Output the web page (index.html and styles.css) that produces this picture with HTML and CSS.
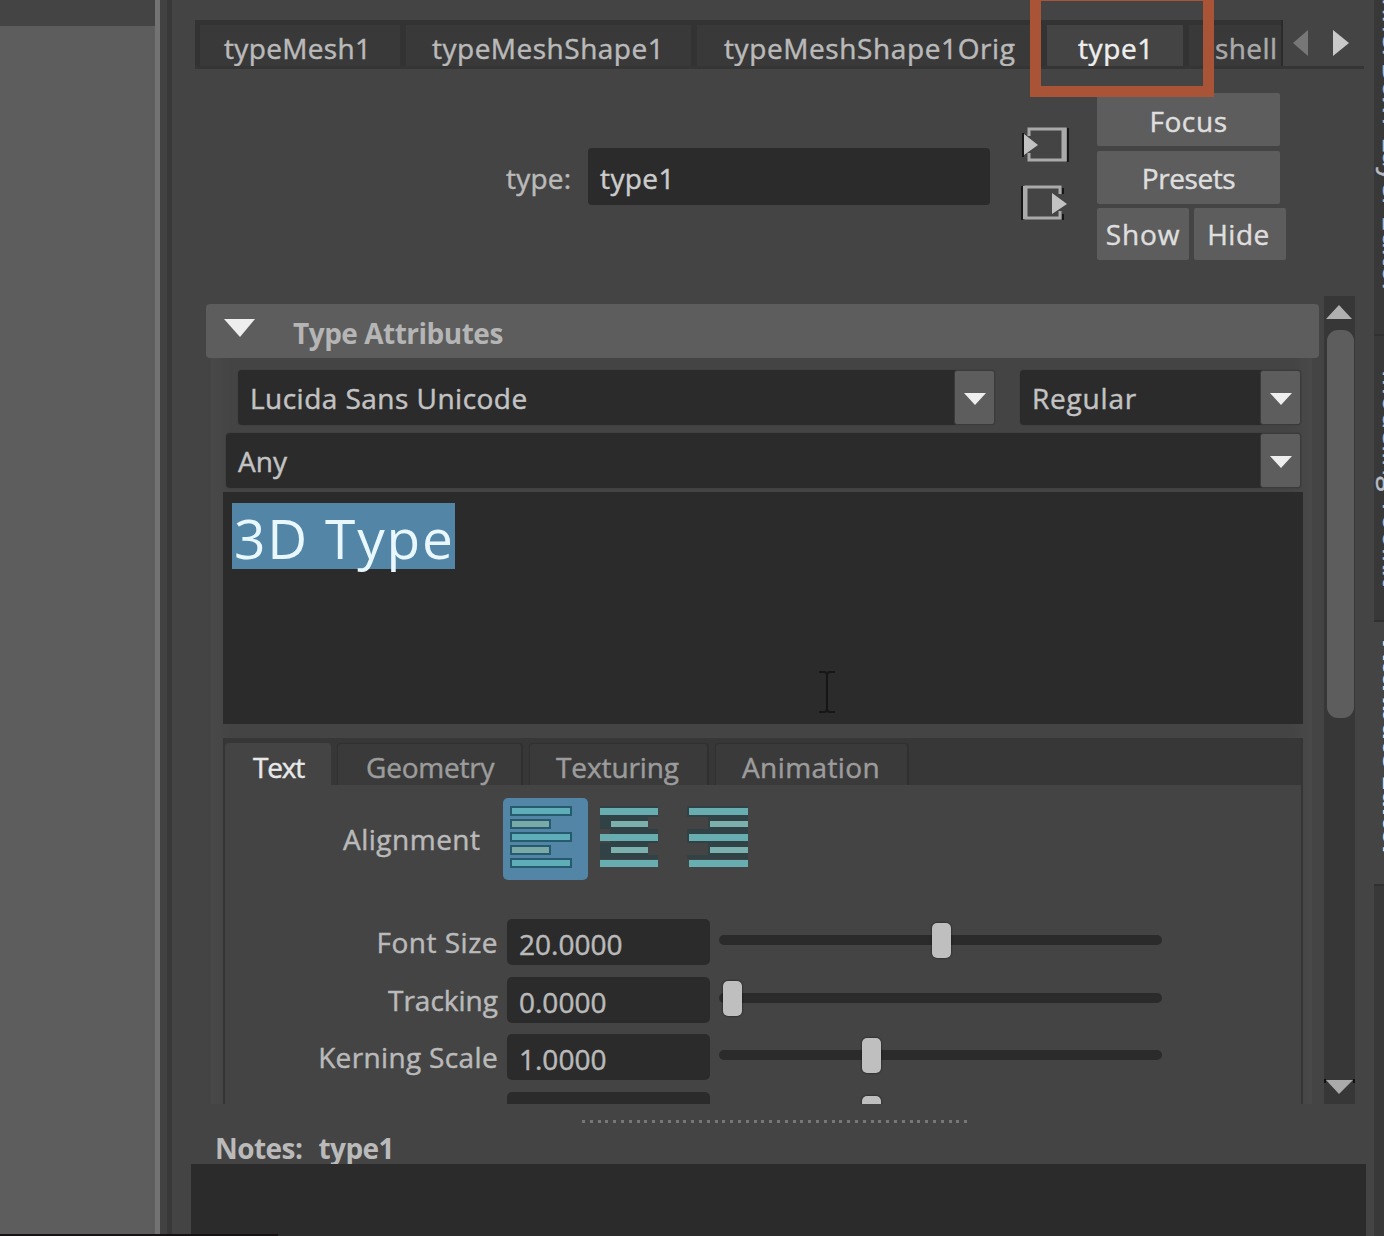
FILE: index.html
```
<!DOCTYPE html>
<html lang="en">
<head>
<meta charset="utf-8">
<title>Attribute Editor</title>
<link rel="stylesheet" href="styles.css">
</head>
<body>
<div class="app">
  <div class="viewport"></div>
  <main class="panel">
    <nav class="node-tabs">
      <div class="tab-strip">
        <span class="tab tab-mesh">typeMesh1</span>
        <span class="tab tab-shape">typeMeshShape1</span>
        <span class="tab tab-orig">typeMeshShape1Orig</span>
        <span class="tab tab-type active">type1</span>
        <span class="tab tab-shell">shell</span>
      </div>
      <svg class="tab-arrows" width="81" height="47" viewBox="0 0 81 47"><path d="M25 10v26L10 23z" fill="#777"/><path d="M50 10v26l16-13z" fill="#c9c9c9"/></svg>
      <div class="highlight"></div>
    </nav>

    <section class="node-head">
      <label class="node-label">type:</label>
      <div class="node-name">type1</div>
      <div class="io">
        <svg width="48" height="38" viewBox="0 0 48 38"><path d="M2 7v24M47 2v34" stroke="#171717" stroke-width="2"/><path d="M8 10V3h36v31H8v-7" fill="none" stroke="#aaa" stroke-width="3"/><path d="M43 2v33" stroke="#aaa" stroke-width="5"/><path d="M3 8v21l14-10z" fill="#c2c2c2"/></svg>
        <svg width="48" height="38" viewBox="0 0 48 38"><path d="M1 2v34M42 4v6M42 30v6" stroke="#171717" stroke-width="2"/><path d="M39 10V3H5v31h34v-7" fill="none" stroke="#aaa" stroke-width="3"/><path d="M4 2v33" stroke="#aaa" stroke-width="4"/><path d="M31 9v21l15-10z" fill="#c2c2c2"/></svg>
      </div>
      <div class="buttons">
        <button class="btn wide focus">Focus</button>
        <button class="btn wide presets">Presets</button>
        <div class="btn-pair"><button class="btn show">Show</button><button class="btn hide">Hide</button></div>
      </div>
    </section>

    <section class="scroll">
      <div class="attributes">
        <header class="section-title"><svg width="32" height="20" viewBox="0 0 32 20"><path d="M0 0h31L16 18z" fill="#eee"/></svg><span class="title-text">Type Attributes</span></header>
        <div class="section-body">
          <div class="font-row">
            <div class="combo family"><span class="t-family">Lucida Sans Unicode</span><i class="drop"></i></div>
            <div class="combo style"><span class="t-style">Regular</span><i class="drop"></i></div>
          </div>
          <div class="combo script"><span>Any</span><i class="drop"></i></div>
          <div class="type-input"><span class="selected">3D Type</span>
            <svg class="ibeam" width="20" height="44" viewBox="0 0 20 44"><path d="M2 2h5q3 0 3 3v34q0 3-3 3H2M18 2h-5q-3 0-3 3v34q0 3 3 3h5" fill="none" stroke="#161616" stroke-width="2"/></svg>
          </div>
          <div class="sub-panel">
            <nav class="sub-tabs">
              <span class="sub on s-text">Text</span><span class="sub s-geo">Geometry</span><span class="sub s-tex">Texturing</span><span class="sub s-anim">Animation</span>
            </nav>
            <div class="align-row">
              <span class="align-label">Alignment</span>
              <svg class="align left" width="85" height="82" viewBox="0 0 85 82"><g fill="#5fadb8" stroke="#255b6d" stroke-width="2"><path d="M8 9h60v8H8zM8 35h60v8H8zM8 61h60v8H8z"/><path fill="#7aa9a8" d="M8 22h39v8H8zM8 48h39v8H8z"/></g></svg>
              <svg class="align" width="85" height="82" viewBox="0 0 85 82"><path d="M12 8h58v11H60v12h10v14H60v12h10v4H12V45h10V31H12z" fill="#304245"/><g fill="#68adb0"><path d="M12 10h58v7H12zM12 36h58v7H12zM12 62h58v7H12z"/><path fill="#7cb0ac" d="M23 23h37v6H23zM23 49h37v6H23z"/></g></svg>
              <svg class="align" width="85" height="82" viewBox="0 0 85 82"><path d="M14 8h61v53H14v-4h21V45H14V31h21V19H14z" fill="#304245"/><g fill="#68adb0"><path d="M16 10h59v7H16zM16 36h59v7H16zM16 62h59v7H16z"/><path fill="#7cb0ac" d="M37 23h38v6H37zM37 49h38v6H37z"/></g></svg>
            </div>
            <div class="attr"><label class="l-size">Font Size</label><div class="num">20.0000</div><div class="slider"><i style="left:213px"></i></div></div>
            <div class="attr"><label class="l-track">Tracking</label><div class="num">0.0000</div><div class="slider"><i style="left:4px"></i></div></div>
            <div class="attr"><label class="l-kern">Kerning Scale</label><div class="num">1.0000</div><div class="slider"><i style="left:143px"></i></div></div>
            <div class="attr"><label></label><div class="num"></div><div class="slider"><i style="left:143px"></i></div></div>
          </div>
        </div>
      </div>
      <div class="scrollbar">
        <svg width="31" height="34" viewBox="0 0 31 34"><path d="M2 23L15 9l13 14z" fill="#b0b0b0"/></svg>
        <div class="thumb"></div>
        <svg class="down" width="31" height="26" viewBox="0 0 31 26"><path d="M1 1v4M30 1v4" stroke="#111" stroke-width="2"/><path d="M2 2h27L15 16z" fill="#aaa"/></svg>
      </div>
    </section>

    <div class="grip"></div>
    <div class="notes-title"><span>Notes:</span><span>type1</span></div>
    <div class="notes"></div>
  </main>
  <aside class="side-tabs">
    <div class="side channel"><span>Channel Box / Layer Editor</span></div>
    <div class="side modeling"><span>Modeling Toolkit</span></div>
    <div class="side attribute"><span>Attribute Editor</span></div>
  </aside>
  <div class="bottom-line"></div>
</div>
</body>
</html>
```
FILE: styles.css
```
* { box-sizing: border-box; }
body { margin: 0; background: #444; color: #bababa; font: 28px/36px "Open Sans", "Noto Sans", sans-serif; -webkit-text-stroke: .45px; }
.app { position: relative; display: flex; width: 1384px; height: 1236px; overflow: hidden; }
svg { display: block; flex: none; }
span, label, .node-name, .num { white-space: nowrap; }

.viewport { flex: none; width: 160px; background: linear-gradient(#444 26px, #5d5d5d 26px); border-right: 5px solid #737373; }
.panel { flex: none; width: 1214px; display: flex; flex-direction: column; background: linear-gradient(90deg, #424242 0 7px, #393939 7px 12px, #444 12px); }

.node-tabs { position: relative; display: flex; flex: none; height: 69px; padding: 20px 10px 0 35px; }
.node-tabs::after { content: ""; position: absolute; left: 35px; right: 10px; bottom: 0; height: 3px; background: #353535; }
.tab-strip { display: flex; gap: 6px; width: 1088px; height: 49px; padding: 5px 0 0 5px; background: #333; border-right: 2px solid #2b2b2b; overflow: hidden; }
.tab { flex: none; height: 44px; padding-top: 5px; background: #393939; line-height: 36px; }
.tab-mesh { width: 200px; padding-left: 24px; letter-spacing: .35px; }
.tab-shape { width: 285px; padding-left: 26px; letter-spacing: .5px; }
.tab-orig { width: 344px; padding-left: 27px; letter-spacing: .6px; }
.tab-type { width: 136px; padding-left: 31px; letter-spacing: .6px; }
.tab-shell { width: 94px; padding-left: 26px; letter-spacing: .4px; color: #aaa; }
.tab.active { background: #444; color: #eee; }
.tab-arrows { width: 81px; }
.highlight { position: absolute; z-index: 2; left: 870px; top: -10px; width: 184px; height: 107px; border: 11px solid #a95437; }

.node-head { flex: none; display: flex; height: 227px; padding-left: 346px; }
.node-label { width: 82px; padding-top: 91px; letter-spacing: .2px; }
.node-name { width: 402px; height: 57px; margin-top: 79px; padding: 12px 12px; border-radius: 4px; background: #2b2b2b; color: #ccc; letter-spacing: .4px; }
.io { display: flex; flex-direction: column; gap: 20px; width: 48px; margin: 57px 0 0 31px; }
.buttons { margin: 24px 0 0 28px; display: flex; flex-direction: column; gap: 5px; }
.btn { height: 52px; width: 92px; padding: 0; border: 0; border-radius: 2px; background: #5d5d5d; color: #dedede; font: inherit; flex: none; -webkit-text-stroke: .45px; }
.btn.wide { width: 183px; height: 53px; }
.focus { padding-top: 2px; letter-spacing: .6px; }
.presets { letter-spacing: -.4px; }
.show { letter-spacing: .9px; }
.hide { letter-spacing: .5px; padding-right: 3px; }
.btn-pair { display: flex; gap: 5px; margin-top: -1px; }

.scroll { flex: none; display: flex; height: 808px; padding-left: 46px; overflow: hidden; }
.attributes { width: 1113px; margin: 8px 5px 0 0; }
.section-title { display: flex; height: 54px; padding: 15px 0 0 18px; background: #5d5d5d; border-radius: 4px; font-weight: 700; color: #b5b5b5; letter-spacing: -.5px; -webkit-text-stroke: 0; }
.title-text { margin: -4px 0 0 37px; }
.section-body { margin: 0 7px 0 5px; padding: 12px 9px 0 12px; background: linear-gradient(90deg, #494949, #444 20px, #444 1080px, #494949); }
.font-row { display: flex; gap: 25px; margin-left: 15px; }
.combo { position: relative; display: flex; justify-content: space-between; height: 55px; background: #2b2b2b; border-radius: 4px; box-shadow: 0 0 0 1px #414141; }
.combo span { padding: 10px 12px; color: #c3c3c3; }
.t-family { letter-spacing: .47px; }
.t-style { letter-spacing: .8px; }
.family { width: 757px; }
.style { width: 281px; }
.script { width: 1075px; margin: 8px 0 0 3px; }
.drop { display: flex; justify-content: center; align-items: center; width: 41px; background: #5d5d5d; border: 1px solid #3b3b3b; border-radius: 3px; }
.drop::before { content: ""; border: 11px solid transparent; border-top: 12px solid #eee; border-bottom: 0; margin-top: 2px; }
.type-input { position: relative; width: 1080px; height: 232px; margin-top: 4px; padding: 11px 9px; background: #2b2b2b; }
.selected { display: inline-block; width: 223px; height: 66px; padding-left: 2px; background: #5285a6; color: #e9f8ff; font-size: 55px; line-height: 69px; letter-spacing: 1.8px; -webkit-text-stroke: 0; }
.ibeam { position: absolute; left: 594px; top: 178px; }

.sub-panel { width: 1080px; height: 367px; margin-top: 14px; border: solid #353535; border-width: 0 2px; background: #444; }
.sub-tabs { display: flex; gap: 6px; height: 47px; padding-top: 5px; background: #373737; }
.sub { height: 42px; padding-top: 5px; background: #3a3a3a; border: solid #303030; border-width: 1px 2px 0 1px; border-radius: 4px 4px 0 0; color: #9c9c9c; }
.sub.on { background: #444; border-color: #444; color: #e8e8e8; }
.s-text { width: 106px; padding-left: 27px; letter-spacing: -1.2px; }
.s-geo { width: 186px; padding-left: 28px; letter-spacing: -.2px; }
.s-tex { width: 180px; padding-left: 26px; letter-spacing: -.1px; }
.s-anim { width: 194px; padding-left: 26px; letter-spacing: .4px; }
.align-row { display: flex; height: 134px; padding: 13px 0 0 118px; }
.align-label { width: 160px; padding-top: 23px; letter-spacing: .5px; }
.align { border-radius: 5px; }
.align.left { background: #5285a6; }
.attr { display: flex; height: 46px; margin-bottom: 11.7px; }
.attr label { width: 273px; padding-top: 5px; text-align: right; }
.l-size { letter-spacing: .5px; }
.l-kern { letter-spacing: .35px; }
.num { width: 203px; height: 46px; margin-left: 9px; padding: 7px 12px; border-radius: 5px; background: #2b2b2b; }
.slider { position: relative; width: 443px; height: 10px; margin: 16px 0 0 9px; border-radius: 5px; background: #2b2b2b; }
.slider i { position: absolute; top: -12px; width: 19px; height: 35px; border-radius: 5px; background: #bfbfbf; box-shadow: 0 0 2px #111; }
.attr:last-child .slider { background: none; }

.scrollbar { width: 31px; display: flex; flex-direction: column; background: #373737; }
.thumb { width: 27px; height: 388px; margin-left: 3px; border-radius: 11px; background: #5d5d5d; }
.down { margin-top: auto; }
.grip { flex: none; width: 390px; height: 3px; margin: 16px 0 0 422px; background: repeating-linear-gradient(90deg, #777 0 3px, transparent 3px 7.8px); }
.notes-title { flex: none; display: flex; gap: 16px; height: 41px; padding: 7px 0 0 55px; font-weight: 700; letter-spacing: -.55px; -webkit-text-stroke: 0; }
.notes { flex: none; height: 72px; margin: 0 8px 0 31px; background: #2b2b2b; }

.side-tabs { width: 10px; display: flex; flex-direction: column; overflow: hidden; background: #383838; }
.side { flex: none; display: flex; justify-content: flex-end; writing-mode: vertical-rl; width: 10px; color: #b8bdc5; border-bottom: 2px solid #303030; }
.side span { flex: none; line-height: 36px; margin-right: -28px; }
.channel { height: 336px; padding-bottom: 40px; }
.modeling { height: 286px; padding-bottom: 33px; }
.attribute { height: 264px; padding-bottom: 27px; background: #444; color: #e0e0e0; font-weight: 700; letter-spacing: -.3px; -webkit-text-stroke: 0; }
.bottom-line { position: absolute; left: 0; bottom: 0; width: 278px; height: 2px; background: #171315; }
```
